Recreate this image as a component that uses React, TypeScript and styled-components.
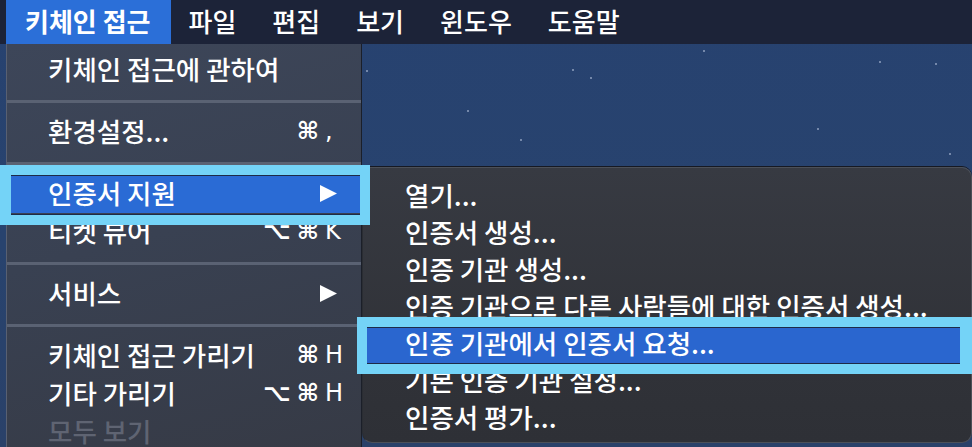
import styled, { createGlobalStyle } from "styled-components";

const GlobalStyle = createGlobalStyle`
  html, body {
    margin: 0;
    padding: 0;
  }
  body {
    width: 972px;
    height: 447px;
    overflow: hidden;
    background: #26406a;
    font-family: "Noto Sans CJK KR", "Noto Sans", "DejaVu Sans", sans-serif;
    -webkit-font-smoothing: antialiased;
  }
`;

const Screen = styled.div`
  position: relative;
  isolation: isolate;
  width: 972px;
  height: 447px;
  overflow: hidden;
  display: flex;
  flex-direction: column;
  background: linear-gradient(180deg, #274270 0%, #28436e 55%, #2a4169 100%);
`;

const MenuBar = styled.div`
  flex: none;
  height: 44px;
  display: flex;
  align-items: stretch;
  padding-left: 6px;
  background: #1c2338;
`;

const BarItem = styled.div<{ $active?: boolean }>`
  display: flex;
  align-items: center;
  padding: ${({ $active }) => ($active ? "0 20px 2px 19px" : "0 18px 2px")};
  font-size: 26px;
  line-height: 1;
  font-weight: ${({ $active }) => ($active ? 700 : 500)};
  color: #ffffff;
  background: ${({ $active }) => ($active ? "#2b6fd8" : "transparent")};
`;

const Desktop = styled.div`
  position: relative;
  flex: 1;
  display: flex;
  align-items: flex-start;
  padding-left: 6px;
`;

const Stars = styled.svg`
  position: absolute;
  top: 0;
  left: 0;
  z-index: -1;
`;

const Menu = styled.div`
  flex: none;
  width: 356px;
  box-sizing: border-box;
  padding: 7px 0;
  display: flex;
  flex-direction: column;
  background: linear-gradient(165deg, #3d4659 0%, #394152 45%, #363a45 100%);
  border-left: 1px solid #586072;
  border-right: 1px solid #1b1f29;
`;

const Item = styled.div<{ $highlight?: boolean; $disabled?: boolean }>`
  position: relative;
  height: 38px;
  display: flex;
  align-items: center;
  justify-content: space-between;
  padding: 0 19px 2px 41px;
  box-sizing: border-box;
  font-size: 26.5px;
  line-height: 1;
  font-weight: 500;
  white-space: nowrap;
  color: ${({ $disabled }) => ($disabled ? "#5f6472" : "#ffffff")};
  background: ${({ $highlight }) => ($highlight ? "#2a6bd5" : "transparent")};
`;

const Separator = styled.div`
  height: 24px;
  display: flex;
  align-items: center;
  &::after {
    content: "";
    flex: 1;
    height: 3px;
    background: #5a6273;
  }
`;

const Shortcut = styled.span`
  display: flex;
  align-items: center;
  gap: 6px;
  font-family: "DejaVu Sans", sans-serif;
  font-size: 24px;
  font-weight: 700;
  color: #ffffff;
`;

const Key = styled.span`
  width: 17px;
  text-align: left;
  font-weight: 400;
`;

const Arrow = styled.svg`
  margin-right: 5px;
`;

const SubMenu = styled.div`
  flex: none;
  margin-top: 123px;
  width: 610px;
  box-sizing: border-box;
  padding: 10px 0 5px;
  background: linear-gradient(180deg, #373a42 0%, #313339 60%, #2e3036 100%);
  border: 1px solid #4c5058;
  border-left-color: #2a2d33;
  border-radius: 0 10px 10px 10px;
  box-shadow: 0 -1px 0 #161922;
`;

const SubItem = styled.div<{ $highlight?: boolean }>`
  position: relative;
  height: 37px;
  display: flex;
  align-items: center;
  padding: 0 0 2px 42px;
  box-sizing: border-box;
  font-size: 26.5px;
  line-height: 1;
  font-weight: 500;
  color: #ffffff;
  white-space: nowrap;
  background: ${({ $highlight }) => ($highlight ? "#2a66cf" : "transparent")};
`;

// cyan annotation frame drawn over a highlighted row
const Callout = styled.div<{ $inset: string; $border: string }>`
  position: absolute;
  z-index: 5;
  inset: ${({ $inset }) => $inset};
  border: solid #74d3f7;
  border-width: ${({ $border }) => $border};
  box-shadow: inset 0 1px 0 #1d2b48, inset 0 -1px 0 #1d2b48;
  pointer-events: none;
`;

type Row =
  | { kind: "sep" }
  | {
      kind: "item";
      label: string;
      mods?: string[];
      keyChar?: string;
      submenu?: boolean;
      highlight?: boolean;
      disabled?: boolean;
    };

const barItems = ["키체인 접근", "파일", "편집", "보기", "윈도우", "도움말"];

const menuRows: Row[] = [
  { kind: "item", label: "키체인 접근에 관하여" },
  { kind: "sep" },
  { kind: "item", label: "환경설정...", mods: ["⌘"], keyChar: "," },
  { kind: "sep" },
  { kind: "item", label: "인증서 지원", submenu: true, highlight: true },
  { kind: "item", label: "티켓 뷰어", mods: ["⌥", "⌘"], keyChar: "K" },
  { kind: "sep" },
  { kind: "item", label: "서비스", submenu: true },
  { kind: "sep" },
  { kind: "item", label: "키체인 접근 가리기", mods: ["⌘"], keyChar: "H" },
  { kind: "item", label: "기타 가리기", mods: ["⌥", "⌘"], keyChar: "H" },
  { kind: "item", label: "모두 보기", disabled: true },
];

const subItems = [
  "열기...",
  "인증서 생성...",
  "인증 기관 생성...",
  "인증 기관으로 다른 사람들에 대한 인증서 생성...",
  "인증 기관에서 인증서 요청...",
  "기본 인증 기관 설정...",
  "인증서 평가...",
];

const stars: [number, number][] = [
  [366, 26], [467, 66], [520, 95], [572, 25], [590, 33], [703, 6],
  [817, 84], [879, 17], [935, 19], [949, 109],
];

const App = () => {
  return (
    <>
      <GlobalStyle />
      <Screen>
        <MenuBar>
          {barItems.map((t, i) => (
            <BarItem key={t} $active={i === 0}>
              {t}
            </BarItem>
          ))}
        </MenuBar>
        <Desktop>
          <Stars width="972" height="403">
            {stars.map(([x, y]) => (
              <rect key={`${x}-${y}`} x={x} y={y} width="2" height="2" fill="#a9b8d2" opacity="0.6" />
            ))}
          </Stars>
          <Menu>
            {menuRows.map((r, i) =>
              r.kind === "sep" ? (
                <Separator key={i} />
              ) : (
                <Item key={i} $highlight={r.highlight} $disabled={r.disabled}>
                  <span>{r.label}</span>
                  {r.mods ? (
                    <Shortcut>
                      {r.mods.map((m) => (
                        <span key={m}>{m}</span>
                      ))}
                      <Key>{r.keyChar}</Key>
                    </Shortcut>
                  ) : null}
                  {r.submenu ? (
                    <Arrow width="17" height="17" viewBox="0 0 17 17">
                      <polygon points="0,0 17,8.5 0,17" fill="#ffffff" />
                    </Arrow>
                  ) : null}
                  {r.highlight ? <Callout $inset="-10px -9px -12px -7px" $border="10px 10px 10px 11px" /> : null}
                </Item>
              )
            )}
          </Menu>
          <SubMenu>
            {subItems.map((t, i) => (
              <SubItem key={t} $highlight={i === 4}>
                {t}
                {i === 4 ? <Callout $inset="-9px -1px -11px -6px" $border="10px 12px 10px 10px" /> : null}
              </SubItem>
            ))}
          </SubMenu>
        </Desktop>
      </Screen>
    </>
  );
};

export default App;
